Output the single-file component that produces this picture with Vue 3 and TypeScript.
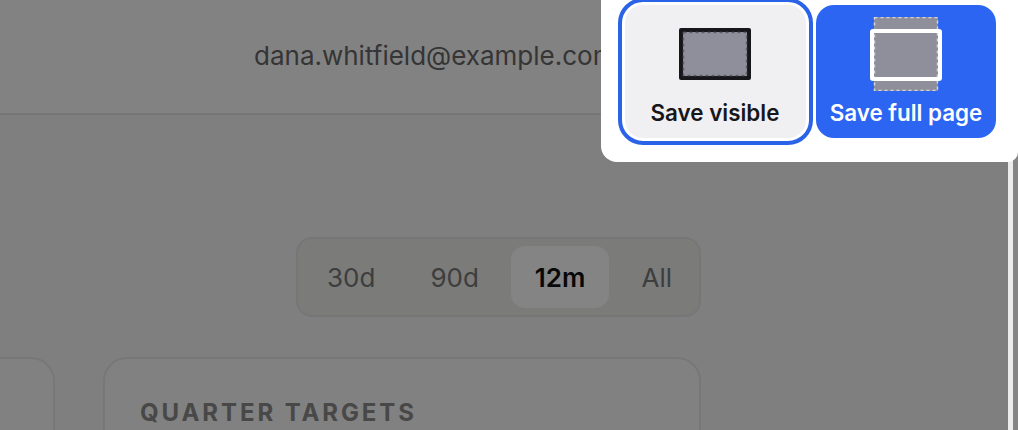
<script setup lang="ts">
const ranges = [
  { label: '30d', active: false },
  { label: '90d', active: false },
  { label: '12m', active: true },
  { label: 'All', active: false },
]
</script>

<template>
  <div class="window">
    <div class="page">
      <header class="topbar">
        <span class="email">dana.whitfield@example.com</span>
      </header>
      <main class="main">
        <div class="range-row">
          <div class="segmented">
            <span
              v-for="r in ranges"
              :key="r.label"
              class="seg"
              :class="{ active: r.active }"
            >{{ r.label }}</span>
          </div>
        </div>
        <div class="cards">
          <section class="card card-left"></section>
          <section class="card">
            <h2 class="card-title">QUARTER TARGETS</h2>
          </section>
        </div>
      </main>
    </div>
    <div class="dim"></div>
    <div class="scrollbar"></div>
    <div class="popup">
      <button class="action visible">
        <span class="shot">
          <svg width="72" height="52" viewBox="0 0 72 52">
            <rect x="0" y="0" width="72" height="52" rx="2" fill="#17171b" />
            <rect x="4" y="4" width="64" height="44" fill="#8f8f9b" />
            <rect x="4.5" y="4.5" width="63" height="43" fill="none" stroke="#5f5f69" stroke-width="1.5" stroke-dasharray="3 3" />
          </svg>
        </span>
        <span class="label">Save visible</span>
      </button>
      <button class="action full">
        <span class="shot">
          <svg width="72" height="74" viewBox="0 0 72 74">
            <rect x="4" y="0" width="64" height="74" fill="#8f8f9b" />
            <rect x="4.5" y="0.5" width="63" height="73" fill="none" stroke="#d5d5dc" stroke-width="1.5" stroke-dasharray="3 3" />
            <rect x="2" y="14" width="68" height="48" rx="1" fill="none" stroke="#fff" stroke-width="4" />
          </svg>
        </span>
        <span class="label">Save full page</span>
      </button>
    </div>
  </div>
</template>

<style>
html,
body {
  margin: 0;
  padding: 0;
  overflow: hidden;
}
</style>

<style scoped>
.window {
  position: relative;
  width: 1018px;
  height: 430px;
  overflow: hidden;
  font-family: Inter, "Liberation Sans", sans-serif;
  background: #fff;
}
.page {
  width: 1008px;
  height: 430px;
  overflow: hidden;
  background: #f3f3f3;
}
.topbar {
  box-sizing: border-box;
  height: 115px;
  border-bottom: 2px solid #e2e2e2;
  padding: 40px 0 0 254px;
  background: #fafafa;
}
.email {
  font-size: 26px;
  line-height: 32px;
  color: #666;
  white-space: nowrap;
}
.main {
  box-sizing: border-box;
  width: 701px;
  padding-top: 122px;
}
.range-row {
  display: flex;
  justify-content: flex-end;
}
.segmented {
  box-sizing: border-box;
  width: 405px;
  height: 80px;
  display: flex;
  align-items: center;
  gap: 9px;
  padding: 0 6px;
  background: #ebebea;
  border: 2px solid #e3e3e2;
  border-radius: 16px;
}
.seg {
  box-sizing: border-box;
  height: 62px;
  padding: 0 23px;
  display: flex;
  align-items: center;
  justify-content: center;
  font-size: 26px;
  color: #777;
  border-radius: 14px;
}
.seg.active {
  padding: 0 24px;
  color: #111;
  font-weight: 600;
  background: #fdfdfd;
}
.cards {
  margin-top: 40px;
  display: grid;
  grid-template-columns: minmax(0, 1fr) 598px;
  gap: 48px;
}
.card {
  box-sizing: border-box;
  height: 120px;
  background: #f8f8f8;
  border: 2px solid #e4e4e4;
  border-radius: 24px;
  padding: 39px 35px;
}
.card-left {
  padding: 0;
  border-left: none;
  border-top-left-radius: 0;
  border-bottom-left-radius: 0;
}
.card-title {
  margin: 0;
  font-size: 24px;
  line-height: 30px;
  font-weight: 700;
  letter-spacing: 2.9px;
  color: #8a8a8a;
  white-space: nowrap;
}
.dim {
  position: absolute;
  inset: 0;
  background: rgba(0, 0, 0, 0.48);
}
.scrollbar {
  position: absolute;
  top: 150px;
  left: 1008px;
  bottom: 0;
  width: 5px;
  background: #ececec;
}
.popup {
  position: absolute;
  top: 0;
  right: 0;
  width: 417px;
  height: 162px;
  box-sizing: border-box;
  background: #fff;
  border-bottom-left-radius: 16px;
  border-bottom-right-radius: 10px;
  display: flex;
  align-items: flex-start;
  gap: 10px;
  padding: 5px 22px 0 24px;
}
.action {
  box-sizing: border-box;
  width: 180px;
  height: 133px;
  flex: none;
  border: none;
  border-radius: 18px;
  padding: 11px 0 0;
  display: flex;
  flex-direction: column;
  align-items: center;
  font-family: inherit;
  font-size: 22.4px;
  font-weight: 600;
}
.shot {
  height: 76px;
  display: flex;
  align-items: center;
  justify-content: center;
}
.label {
  margin-top: 7px;
  line-height: 28px;
  white-space: nowrap;
}
.visible {
  width: 181px;
  padding-right: 1px;
  background: #f0f0f2;
  color: #17171b;
  outline: 4px solid #2a63e8;
  outline-offset: 3px;
}
.full {
  background: #2b65f2;
  color: #fff;
}
</style>
